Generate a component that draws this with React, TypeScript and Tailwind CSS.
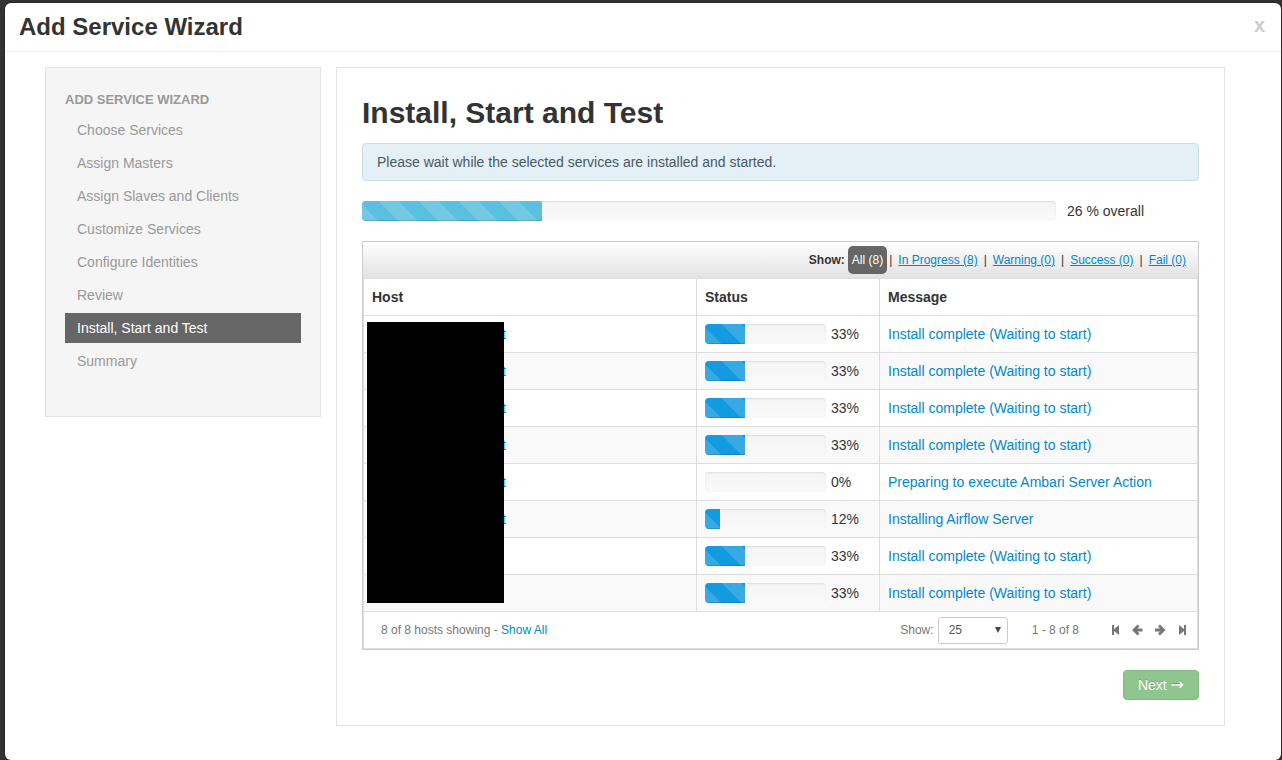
import React from "react";

const steps = [
  "Choose Services",
  "Assign Masters",
  "Assign Slaves and Clients",
  "Customize Services",
  "Configure Identities",
  "Review",
  "Install, Start and Test",
  "Summary",
];
const activeStep = "Install, Start and Test";

const done = "Install complete (Waiting to start)";
const hosts = [
  { tail: "t", percent: 33, message: done },
  { tail: "t", percent: 33, message: done },
  { tail: "t", percent: 33, message: done },
  { tail: "t", percent: 33, message: done },
  { tail: "t", percent: 0, message: "Preparing to execute Ambari Server Action" },
  { tail: "t", percent: 12, message: "Installing Airflow Server" },
  { tail: "", percent: 33, message: done },
  { tail: "", percent: 33, message: done },
];

const filters = ["In Progress (8)", "Warning (0)", "Success (0)", "Fail (0)"];

const stripes =
  "bg-[linear-gradient(45deg,rgba(255,255,255,0.15)_25%,transparent_25%,transparent_50%,rgba(255,255,255,0.15)_50%,rgba(255,255,255,0.15)_75%,transparent_75%,transparent)] bg-[length:40px_40px] bg-[position:17px_0]";

function Progress({ percent, tone, label }: { percent: number; tone: string; label: string }) {
  return (
    <div
      role="progressbar"
      aria-label={label}
      aria-valuenow={percent}
      className="h-5 min-w-0 flex-1 overflow-hidden rounded bg-linear-to-b from-[#f5f5f5] to-[#f9f9f9] shadow-[inset_0_1px_2px_rgba(0,0,0,0.1)]"
    >
      <div
        className={`h-full shadow-[inset_0_-1px_0_rgba(0,0,0,0.15)] ${tone} ${stripes}`}
        style={{ width: `${percent}%` }}
      />
    </div>
  );
}

const icons = {
  First: "M4 1h2v4l5-4v10L6 7v4H4z",
  Previous: "M6.500 0.500L8.500 2.500 6.500 4.500H11.500v3H6.500L8.500 9.500l-2 2L1 6z",
  Next: "M6 0.500L4 2.500l2 2H1v3h5L4 9.500l2 2L11.500 6z",
  Last: "M9 1H7v4L2 1v10l5-4v4h2z",
};

export default function App() {
  return (
    <div className="flex min-h-screen flex-col bg-[#333] pt-[3px] pr-px pl-[5px] font-['Liberation_Sans',Arial,sans-serif] text-sm leading-5 text-[#333]">
      <div className="flex-1 rounded-md bg-white shadow-[0_0_2px_rgba(0,0,0,0.8)]">
        <header className="flex items-start justify-between border-b border-[#eee] py-1 pr-4 pl-3.5">
          <h1 className="text-2xl leading-10 font-bold">Add Service Wizard</h1>
          <button type="button" aria-label="Close" className="mt-2 text-xl leading-5 font-bold text-[#ccc]">
            x
          </button>
        </header>

        <div className="flex items-start gap-[15px] pt-[15px] pr-14 pb-[34px] pl-10">
          <nav className="h-[350px] w-[276px] shrink-0 border border-[#e3e3e3] bg-[#f5f5f5] px-[19px] pt-[22px]">
            <h2 className="text-[13px] leading-5 font-bold text-[#999] uppercase">Add Service Wizard</h2>
            <ul className="mt-[5px] flex flex-col gap-[3px]">
              {steps.map((step) => (
                <li key={step}>
                  <a
                    href="#"
                    aria-current={step === activeStep ? "step" : undefined}
                    className={`block px-3 py-[5px] ${step === activeStep ? "bg-[#666] text-white" : "text-[#999]"}`}
                  >
                    {step}
                  </a>
                </li>
              ))}
            </ul>
          </nav>

          <main className="min-w-0 flex-1 border border-[#e3e3e3] px-[25px] pt-[25px] pb-[25px]">
            <h2 className="text-3xl leading-10 font-bold">Install, Start and Test</h2>
            <p className="mt-2.5 rounded border border-[#c9dfe0] bg-[#e4f0f5] px-3.5 py-2 text-[#4a5a63]">
              Please wait while the selected services are installed and started.
            </p>

            <div className="mt-5 flex items-center gap-[11px]">
              <Progress percent={26} tone="bg-[#5bc0de]" label="Overall progress" />
              <span className="w-[132px]">26 % overall</span>
            </div>

            <div className="mt-5 border border-[#ccc]">
              <div className="flex h-9 items-center justify-end bg-linear-to-b from-white to-[#e2e2e2] pr-2 text-xs">
                <b className="mr-[3px]">Show:</b>
                <button type="button" className="h-7 rounded-[5px] bg-[#666] px-1 text-white">
                  All (8)
                </button>
                {filters.map((filter) => (
                  <span key={filter} className="ml-0.5 flex gap-1.5">
                    <span>|</span>
                    <a href="#" className="mr-1 text-[#08c] underline">
                      {filter}
                    </a>
                  </span>
                ))}
              </div>

              <div className="relative">
                <table className="w-full table-fixed border-collapse border border-[#ddd] text-left">
                  <thead>
                    <tr className="h-[37px]">
                      <th className="border border-[#ddd] px-2">Host</th>
                      <th className="w-[183px] border border-[#ddd] px-2">Status</th>
                      <th className="w-[318px] border border-[#ddd] px-2">Message</th>
                    </tr>
                  </thead>
                  <tbody>
                    {hosts.map((host, i) => (
                      <tr key={i} className="h-[37px] even:bg-[#f9f9f9]">
                        <td className="border border-[#ddd] pl-[138px]">
                          <a href="#" className="text-[#08c]">
                            {host.tail}
                          </a>
                        </td>
                        <td className="border border-[#ddd] px-2">
                          <div className="flex items-center gap-[5px]">
                            <Progress percent={host.percent} tone="bg-[#149bdf]" label={`Host ${i + 1} progress`} />
                            <span className="w-10">{host.percent}%</span>
                          </div>
                        </td>
                        <td className="border border-[#ddd] px-2">
                          <a href="#" className="text-[#08c]">
                            {host.message}
                          </a>
                        </td>
                      </tr>
                    ))}
                  </tbody>
                </table>
                <div className="absolute top-11 bottom-[9px] left-1 w-[137px] bg-black" />
              </div>

              <div className="flex h-[37px] items-center border border-t-0 border-[#ddd] pr-2 pl-[17px] text-xs text-[#777]">
                <span className="flex-1">
                  8 of 8 hosts showing -{" "}
                  <a href="#" className="text-[#08c]">
                    Show All
                  </a>
                </span>
                <label htmlFor="page-size" className="mr-1">
                  Show:
                </label>
                <div className="relative mr-6">
                  <select
                    id="page-size"
                    className="block h-[27px] w-[70px] appearance-none rounded-[3px] border border-[#ccc] bg-white pl-2.5 text-[#555]"
                  >
                    <option>25</option>
                  </select>
                  <svg viewBox="0 0 6 6" className="pointer-events-none absolute top-2.5 right-[7px] size-1.5 fill-[#444]">
                    <path d="M0 0h6L3 6z" />
                  </svg>
                </div>
                <span className="mr-[29px]">1 - 8 of 8</span>
                <div className="flex items-center gap-[11px]">
                  {Object.entries(icons).map(([name, d]) => (
                    <button key={name} type="button" aria-label={`${name} page`}>
                      <svg viewBox="0 0 12 12" className="size-3 fill-[#777]">
                        <path d={d} />
                      </svg>
                    </button>
                  ))}
                </div>
              </div>
            </div>

            <div className="mt-5 flex justify-end">
              <button
                type="button"
                className="h-[30px] rounded border border-[#81b882] bg-[#8fc58f] px-3.5 text-white [text-shadow:0_-1px_0_rgba(0,0,0,0.2)]"
              >
                Next <span className="font-['DejaVu_Sans',sans-serif] text-base leading-5">→</span>
              </button>
            </div>
          </main>
        </div>
      </div>
    </div>
  );
}
